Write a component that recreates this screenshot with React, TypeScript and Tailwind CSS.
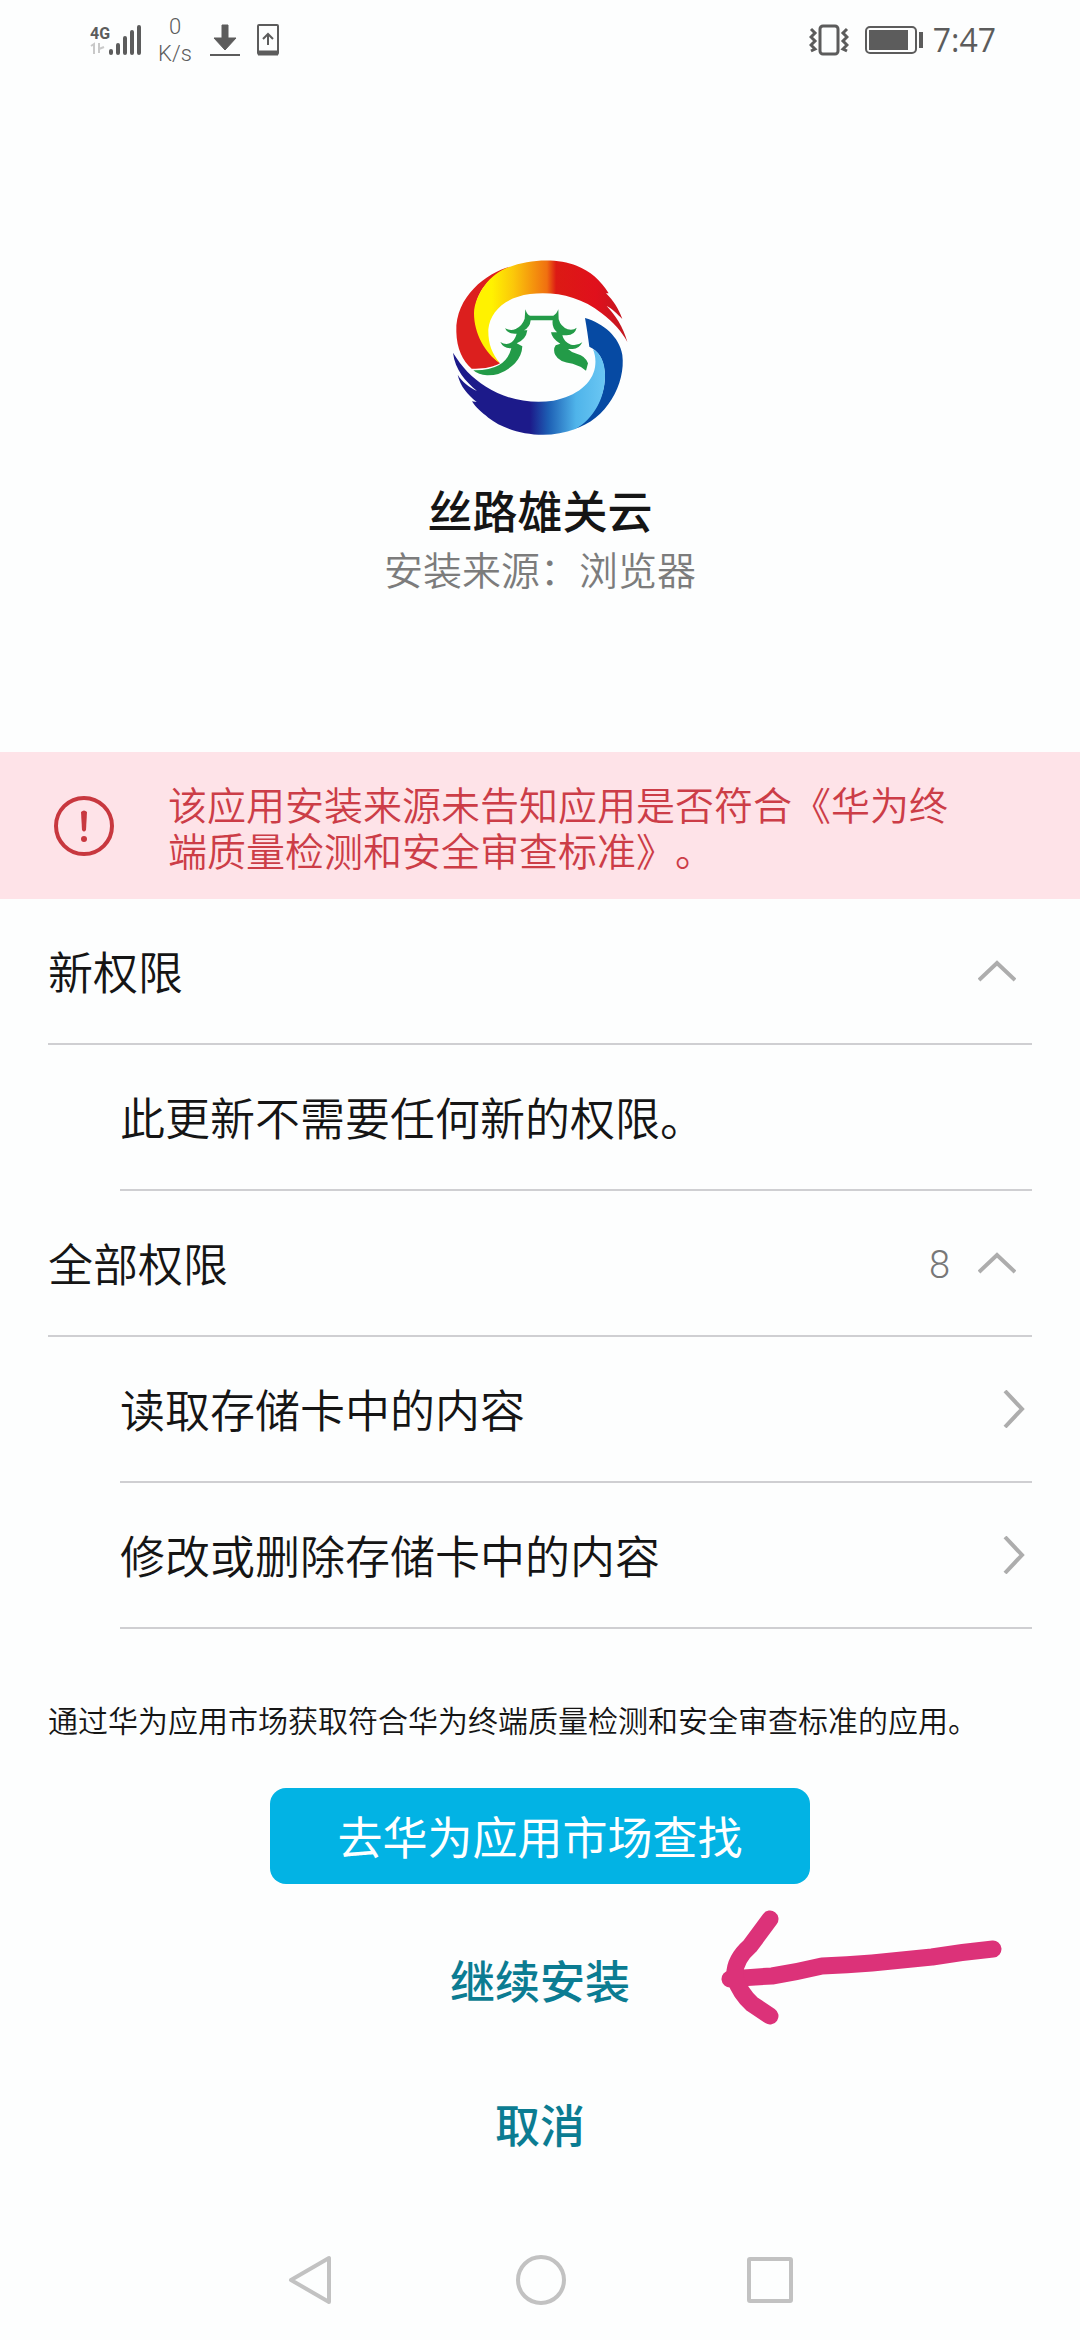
import type { ReactNode } from "react";

function SignalIcon() {
  return (
    <svg width="34" height="32" viewBox="0 0 34 32" className="text-[#5c5c5c]" aria-hidden="true">
      <g stroke="currentColor" strokeWidth="4" strokeLinecap="round">
        <path d="M4 29v-2M11 29V21M18 29V14M25 29V8M32 29V3" />
      </g>
    </svg>
  );
}

function StatusBar() {
  return (
    <header className="flex h-20 items-center justify-between pl-[90px] pr-[84px] text-[#5c5c5c]">
      <div className="flex items-center">
        <div className="flex w-[17px] flex-col">
          <span className="font-['Roboto'] text-base leading-4 font-bold">4G</span>
          <svg width="15" height="12" viewBox="0 0 15 12" fill="none" stroke="#c9c9c9" strokeWidth="2" aria-hidden="true">
            <path d="M1 4l3-2v10M9 1v10M9 7l5-2" />
          </svg>
        </div>
        <SignalIcon />
        <div className="ml-4 flex w-9 flex-col items-center text-[22px] leading-[27px] font-[350]">
          <span>0</span>
          <span>K/s</span>
        </div>
        <svg className="ml-4" width="32" height="32" viewBox="0 0 32 32" aria-hidden="true">
          <path d="M13 1h6v13h8L16 26 5 14h8z" fill="currentColor" stroke="currentColor" strokeLinejoin="round" />
          <path d="M1 31h30" stroke="currentColor" strokeWidth="2" />
        </svg>
        <svg className="ml-4" width="22" height="32" viewBox="0 0 22 32" fill="none" stroke="currentColor" aria-hidden="true">
          <rect x="1" y="1" width="20" height="29" rx="1" strokeWidth="2" />
          <path d="M1 29h20" strokeWidth="5" />
          <path d="M11 21V10M6 15l5-5 5 5" strokeWidth="2" />
        </svg>
      </div>
      <div className="flex items-center">
        <svg width="40" height="32" viewBox="0 0 40 32" fill="none" stroke="currentColor" aria-hidden="true">
          <rect x="11" y="2" width="18" height="28" rx="3" strokeWidth="3" />
          <path d="M2 5l4 4-4 4 4 4-4 4 4 4-4 2M38 5l-4 4 4 4-4 4 4 4-4 4 4 2" strokeWidth="3" />
        </svg>
        <svg className="ml-4" width="58" height="28" viewBox="0 0 58 28" aria-hidden="true">
          <rect x="1" y="1" width="50" height="26" rx="4" fill="none" stroke="currentColor" strokeWidth="2" />
          <rect x="4" y="4" width="39" height="20" fill="currentColor" />
          <path d="M56 6v16" stroke="currentColor" strokeWidth="4" />
        </svg>
        <span className="ml-[10px] font-['Open_Sans','Noto_Sans'] text-[32px] leading-10">7:47</span>
      </div>
    </header>
  );
}

function AppLogo() {
  return (
    <svg width="180" height="180" viewBox="60 51 540 540" role="img" aria-label="丝路雄关云">
      <defs>
        <linearGradient id="warm" gradientUnits="userSpaceOnUse" x1="130" y1="0" x2="590" y2="0">
          <stop offset="0.12" stopColor="#fff200" />
          <stop offset="0.26" stopColor="#fbc80a" />
          <stop offset="0.48" stopColor="#f07010" />
          <stop offset="0.54" stopColor="#dc1a14" />
          <stop offset="0.8" stopColor="#e0101c" />
          <stop offset="1" stopColor="#c01820" />
        </linearGradient>
        <linearGradient id="cool" gradientUnits="userSpaceOnUse" x1="70" y1="0" x2="530" y2="0">
          <stop offset="0.5" stopColor="#1c1a8a" />
          <stop offset="0.62" stopColor="#1d5fb4" />
          <stop offset="0.8" stopColor="#4fb4ea" />
          <stop offset="1" stopColor="#6cc8f4" />
        </linearGradient>
      </defs>
      <path d="M240 80C170 98 75 170 79 275C80 325 98 362 125 386C155 388 190 382 210 370C120 290 90 150 240 80Z" fill="#dc1f1e" />
      <path d="M236 82C300 56 385 55 440 77C480 93 512 120 536 160L528 160C550 182 565 205 577 237C562 222 545 205 530 198C555 225 580 260 592 306C575 275 552 248 515 220C450 168 375 154 300 162C225 172 180 215 175 268C174 310 185 340 210 370C165 340 132 280 132 220C134 165 180 100 236 82Z" fill="url(#warm)" />
      <path d="M465 234C520 250 568 290 577 345C588 430 530 540 430 568C490 535 530 465 524 395C520 355 505 332 478 320C474 290 470 262 465 234Z" fill="#064aa3" />
      <path d="M489 328C515 342 526 375 525 410C524 475 492 535 436 567C345 602 235 580 175 533C155 517 137 503 126 484L140 486C113 463 91 440 83 404C97 426 115 440 141 453C108 425 75 390 69 338C95 380 125 413 168 440C225 477 300 493 370 482C440 469 487 430 495 382C498 362 496 345 489 328Z" fill="url(#cool)" />
      <g fill="#239b48">
        <path d="M286 208Q292 227 301 227H370Q380 222 385 208L386 238Q392 260 413 268Q430 272 440 263Q435 285 410 286H397Q402 307 423 314Q443 318 457 307Q447 327 428 327H414Q425 338 440 341Q467 348 474 370L468 392Q450 377 428 371Q387 367 376 345Q368 329 377 316L391 311Q366 297 363 277H381Q365 263 368 241H302Q300 262 282 271H292Q288 299 260 310L277 319Q276 347 255 370Q217 407 171 406Q145 405 130 391Q178 392 206 376Q229 363 239 339L244 325Q220 325 211 306Q225 315 239 310Q254 303 260 281Q232 283 225 265Q242 274 257 267Q277 257 284 236Z" />
      </g>
    </svg>
  );
}

function Chevron({ direction }: { direction: "up" | "right" }) {
  return direction === "up" ? (
    <svg width="38" height="22" viewBox="0 0 38 22" fill="none" stroke="#adadad" strokeWidth="4" aria-hidden="true">
      <path d="M1 20L19 3l18 17" />
    </svg>
  ) : (
    <svg width="22" height="38" viewBox="0 0 22 38" fill="none" stroke="#adadad" strokeWidth="4" aria-hidden="true">
      <path d="M2 1l17 18L2 37" />
    </svg>
  );
}

const rowBase = "flex h-[146px] items-center justify-between border-b-2 border-[#cfcfd2] text-left text-[45px] leading-[60px] font-[350]";

function SectionRow({ title, count }: { title: string; count?: string }) {
  return (
    <button type="button" aria-expanded="true" className={`${rowBase} mx-12 pr-4`}>
      <span className="pt-2">{title}</span>
      <span className="flex items-center gap-7">
        {count && <span className="pt-1 font-['Roboto'] text-[38px] text-[#777]">{count}</span>}
        <Chevron direction="up" />
      </span>
    </button>
  );
}

function PermissionRow({ children }: { children: ReactNode }) {
  return (
    <button type="button" className={`${rowBase} mr-12 ml-[120px] pr-[7px]`}>
      <span className="pt-2">{children}</span>
      <Chevron direction="right" />
    </button>
  );
}

function PointerArrow() {
  return (
    <svg
      className="pointer-events-none absolute -top-6 left-2/3"
      width="284"
      height="128"
      viewBox="718 1908 284 128"
      fill="none"
      stroke="#dc3279"
      strokeWidth="17"
      strokeLinecap="round"
      strokeLinejoin="round"
      aria-hidden="true"
    >
      <path d="M728 1979Q750 1977 770 1976Q795 1972 820 1966Q845 1965 870 1963L930 1957Q960 1952 991 1949" />
      <path d="M768 1919L748 1946Q731 1961 733 1978Q738 1993 750 2004L768 2016" />
    </svg>
  );
}

export default function App() {
  return (
    <div className="flex min-h-screen flex-col bg-[#fdfefe] font-['Roboto','Noto_Sans_CJK_SC',sans-serif] text-[#151515] [text-spacing-trim:space-all]">
      <StatusBar />
      <main className="flex flex-1 flex-col">
        <section className="flex flex-col items-center pt-[177px] pb-[152px]">
          <AppLogo />
          <h1 className="mt-[47px] text-[45px] leading-[60px] font-medium">丝路雄关云</h1>
          <p className="text-[39px] leading-[56px] font-[350] text-[#7c7c7c]">安装来源：浏览器</p>
        </section>

        <section role="alert" className="flex h-[147px] items-center bg-[#fee3e8] pr-[120px] pl-[54px] text-[#cc3d47]">
          <svg className="shrink-0" width="60" height="60" viewBox="0 0 60 60" aria-hidden="true">
            <circle cx="30" cy="30" r="28" fill="none" stroke="#c8383f" strokeWidth="4" />
            <path d="M27 16q3-3 6 0l-1 18q-2 3-4 0z" fill="#c8383f" />
            <circle cx="30" cy="43" r="3" fill="#c8383f" />
          </svg>
          <p className="ml-[54px] pt-2 text-[39px] leading-[46px] font-[350]">
            该应用安装来源未告知应用是否符合《华为终端质量检测和安全审查标准》。
          </p>
        </section>

        <section className="flex flex-col">
          <SectionRow title="新权限" />
          <p className={`${rowBase} mr-12 ml-[120px] pt-2`}>此更新不需要任何新的权限。</p>
          <SectionRow title="全部权限" count="8" />
          <PermissionRow>读取存储卡中的内容</PermissionRow>
          <PermissionRow>修改或删除存储卡中的内容</PermissionRow>
        </section>

        <p className="mx-12 mt-[71px] text-[30px] leading-[44px] font-[350]">
          通过华为应用市场获取符合华为终端质量检测和安全审查标准的应用。
        </p>

        <div className="mt-[44px] flex flex-col items-center gap-12 text-[45px] leading-[60px]">
          <button type="button" className="h-24 w-1/2 rounded-2xl bg-[#02b3e4] pt-2 text-white">
            去华为应用市场查找
          </button>
          <div className="relative flex w-full justify-center">
            <button type="button" className="h-24 px-8 pt-2 font-medium text-[#0b7c92]">
              继续安装
            </button>
            <PointerArrow />
          </div>
          <button type="button" className="h-24 px-8 pt-2 font-medium text-[#0b7c92]">
            取消
          </button>
        </div>
      </main>

      <nav className="flex h-[120px] items-center justify-center gap-[181px] text-[#c2c2c2]">
        <button type="button" aria-label="返回">
          <svg width="48" height="50" viewBox="0 0 48 50" fill="none" stroke="currentColor" strokeWidth="4" strokeLinejoin="round">
            <path d="M42 3v44L4 25z" />
          </svg>
        </button>
        <button type="button" aria-label="主屏幕">
          <svg width="50" height="50" viewBox="0 0 50 50" fill="none" stroke="currentColor" strokeWidth="4">
            <circle cx="25" cy="25" r="23" />
          </svg>
        </button>
        <button type="button" aria-label="最近任务">
          <svg width="46" height="46" viewBox="0 0 46 46" fill="none" stroke="currentColor" strokeWidth="4" strokeLinejoin="round">
            <rect x="2" y="2" width="42" height="42" rx="1" />
          </svg>
        </button>
      </nav>
    </div>
  );
}
